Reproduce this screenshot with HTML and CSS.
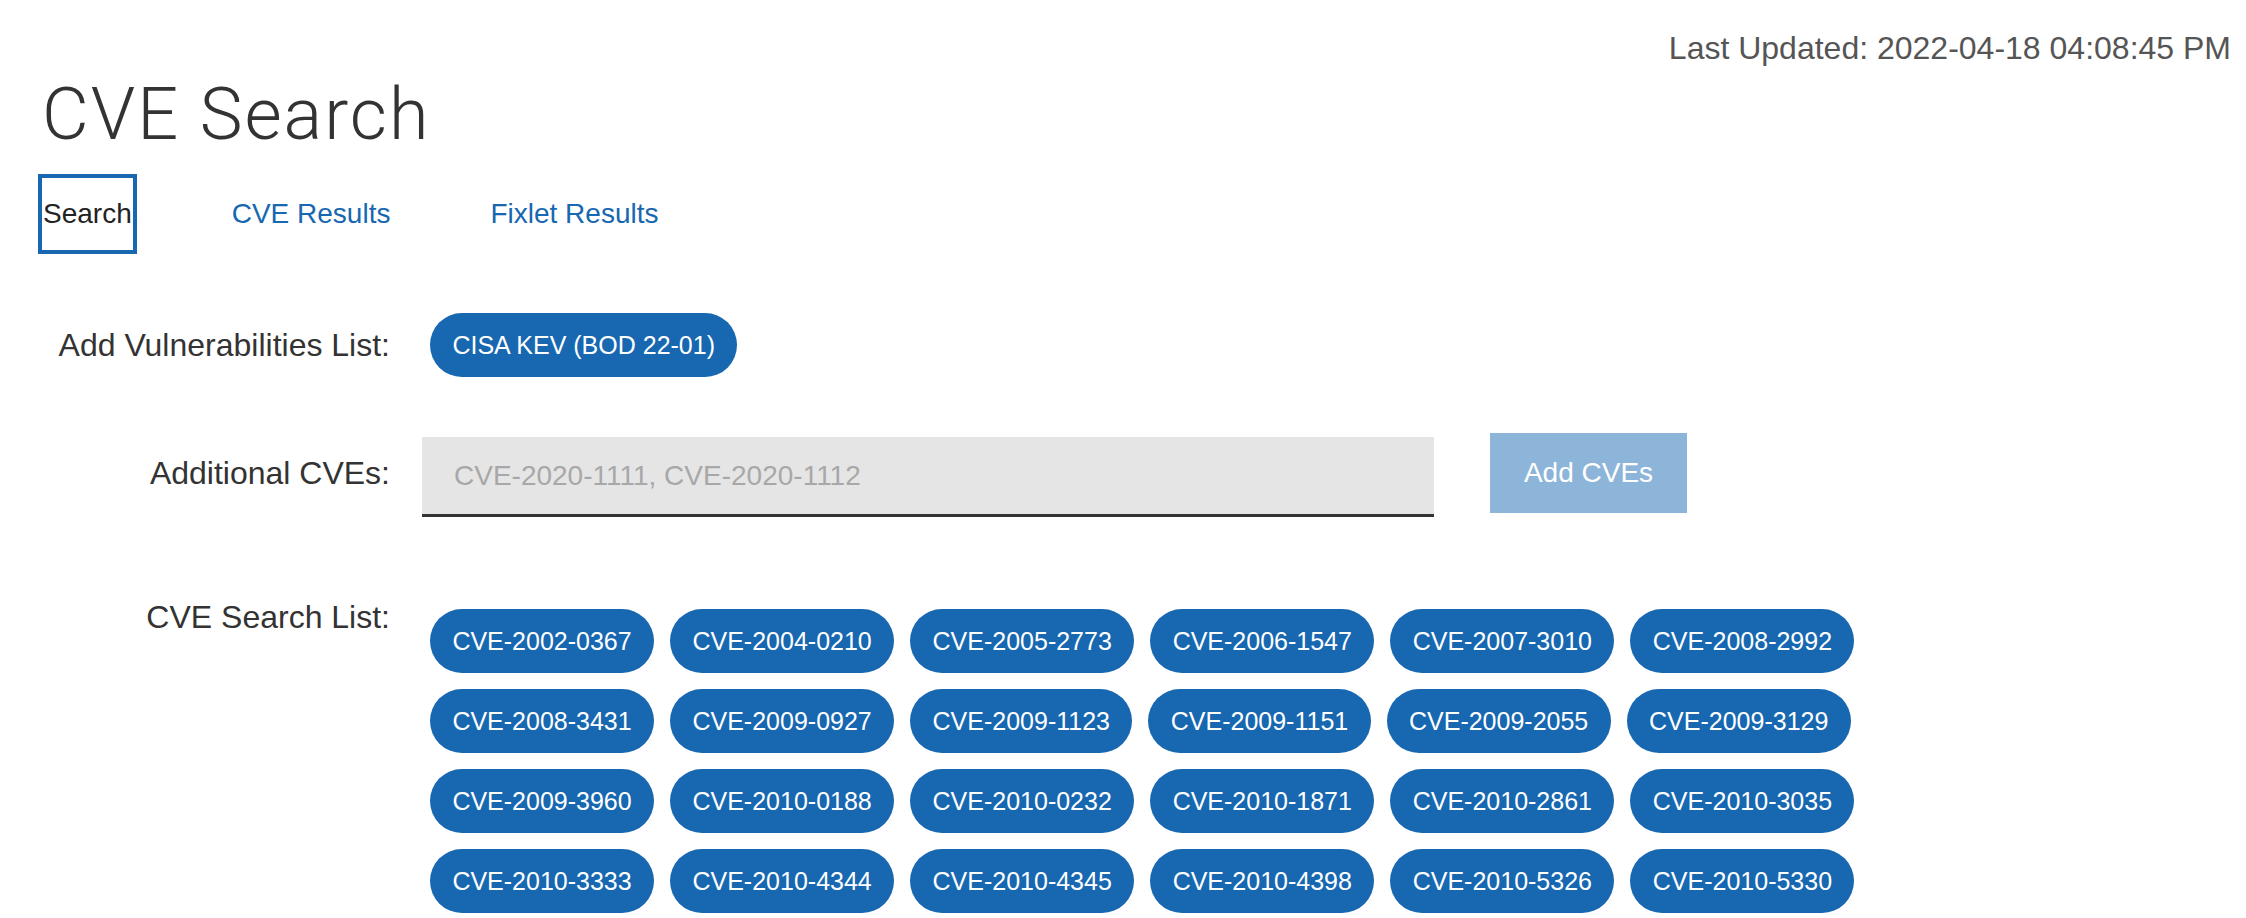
FILE: index.html
```html
<!DOCTYPE html>
<html lang="en">
<head>
  <meta charset="UTF-8">
  <meta name="viewport" content="width=device-width, initial-scale=1.0">
  <title>CVE Search</title>
  <link rel="stylesheet" href="styles.css">
</head>
<body>

  <div class="page">
    <!-- Header -->
    <div class="updated">Last Updated: 2022-04-18 04:08:45 PM</div>
    <h1 class="title">CVE Search</h1>

    <!-- Tabs -->
    <nav class="tabs">
      <a class="tab active" href="#search">Search</a>
      <a class="tab" href="#cve-results">CVE Results</a>
      <a class="tab" href="#fixlet-results">Fixlet Results</a>
    </nav>

    <!-- Search form -->
    <div class="form">
      <div class="row row-lists">
        <label class="label">Add Vulnerabilities List:</label>
        <div class="value">
          <button class="chip">CISA KEV (BOD 22-01)</button>
        </div>
      </div>

      <div class="row row-extra">
        <label class="label" for="extra-cves">Additional CVEs:</label>
        <div class="value">
          <input class="cve-input" id="extra-cves" type="text" placeholder="CVE-2020-1111, CVE-2020-1112">
          <button class="add-button" disabled>Add CVEs</button>
        </div>
      </div>

      <div class="row row-search-list">
        <label class="label">CVE Search List:</label>
        <div class="chip-list" id="chip-list"></div>
      </div>
    </div>
  </div>

  <script>
    const cves = [
      'CVE-2002-0367', 'CVE-2004-0210', 'CVE-2005-2773', 'CVE-2006-1547', 'CVE-2007-3010', 'CVE-2008-2992',
      'CVE-2008-3431', 'CVE-2009-0927', 'CVE-2009-1123', 'CVE-2009-1151', 'CVE-2009-2055', 'CVE-2009-3129',
      'CVE-2009-3960', 'CVE-2010-0188', 'CVE-2010-0232', 'CVE-2010-1871', 'CVE-2010-2861', 'CVE-2010-3035',
      'CVE-2010-3333', 'CVE-2010-4344', 'CVE-2010-4345', 'CVE-2010-4398', 'CVE-2010-5326', 'CVE-2010-5330'
    ];

    let list = document.getElementById("chip-list");

    cves.forEach(function (cve) {
      let chip = document.createElement("button");
      chip.className = "chip";
      chip.innerText = cve;
      list.appendChild(chip);
    });
  </script>

</body>
</html>
```

FILE: styles.css
```css
/* Page basics */
body {
  margin: 0;
  font-family: "Liberation Sans", Arial, sans-serif;
  color: #333;
  background-color: #fff;
  overflow: hidden;
}

.page {
  padding: 0 15px 0 38px;
}

/* Header */
.updated {
  margin-top: 30px;
  font-size: 32px;
  line-height: 37px;
  color: #555;
  text-align: right;
}

.title {
  margin: 12px 0 0 4px;
  font-family: Roboto, "Liberation Sans", sans-serif;
  font-weight: 300;
  font-size: 72px;
  line-height: 72px;
  letter-spacing: 2px;
  color: #333;
}

/* Tabs */
.tabs {
  display: flex;
  gap: 90px;
  margin-top: 23px;
}

.tab {
  padding: 20px 1px;
  border: 4px solid transparent;
  font-size: 28px;
  line-height: 32px;
  color: #1767b1;
  text-decoration: none;
}

.tab.active {
  border-color: #1767b1;
  color: #222;
}

/* Form rows */
.row {
  display: flex;
}

.label {
  width: 352px;
  margin-right: 32px;
  flex-shrink: 0;
  font-size: 32px;
  text-align: right;
  color: #333;
}

.value {
  display: flex;
}

.row-lists {
  margin-top: 59px;
  align-items: center;
  height: 64px;
}

.row-lists .chip {
  margin: 0 0 0 8px;
}

.row-extra {
  margin-top: 56px;
  align-items: flex-start;
}

.row-extra .label {
  line-height: 37px;
  margin-top: 22px;
}

.cve-input {
  width: 1012px;
  height: 80px;
  margin-top: 4px;
  padding: 0 32px;
  box-sizing: border-box;
  border: none;
  border-bottom: 3px solid #333;
  background-color: #e5e5e5;
  font-family: "Liberation Sans", Arial, sans-serif;
  font-size: 28px;
  color: #333;
  outline: none;
}

.cve-input::placeholder {
  color: #a8a8a8;
}

.add-button {
  width: 197px;
  height: 80px;
  margin-left: 56px;
  border: none;
  background-color: #8db4d9;
  color: #fff;
  font-family: "Liberation Sans", Arial, sans-serif;
  font-size: 28px;
}

.row-search-list {
  margin-top: 84px;
  align-items: flex-start;
}

.row-search-list .label {
  line-height: 32px;
}

/* CVE chips */
.chip-list {
  display: flex;
  flex-wrap: wrap;
  width: 1500px;
}

.chip {
  height: 64px;
  margin: 8px;
  padding: 0 22.4px;
  border: none;
  border-radius: 32px;
  background-color: #1767b1;
  color: #fff;
  font-family: "Liberation Sans", Arial, sans-serif;
  font-size: 25px;
  white-space: nowrap;
  cursor: pointer;
}
```
